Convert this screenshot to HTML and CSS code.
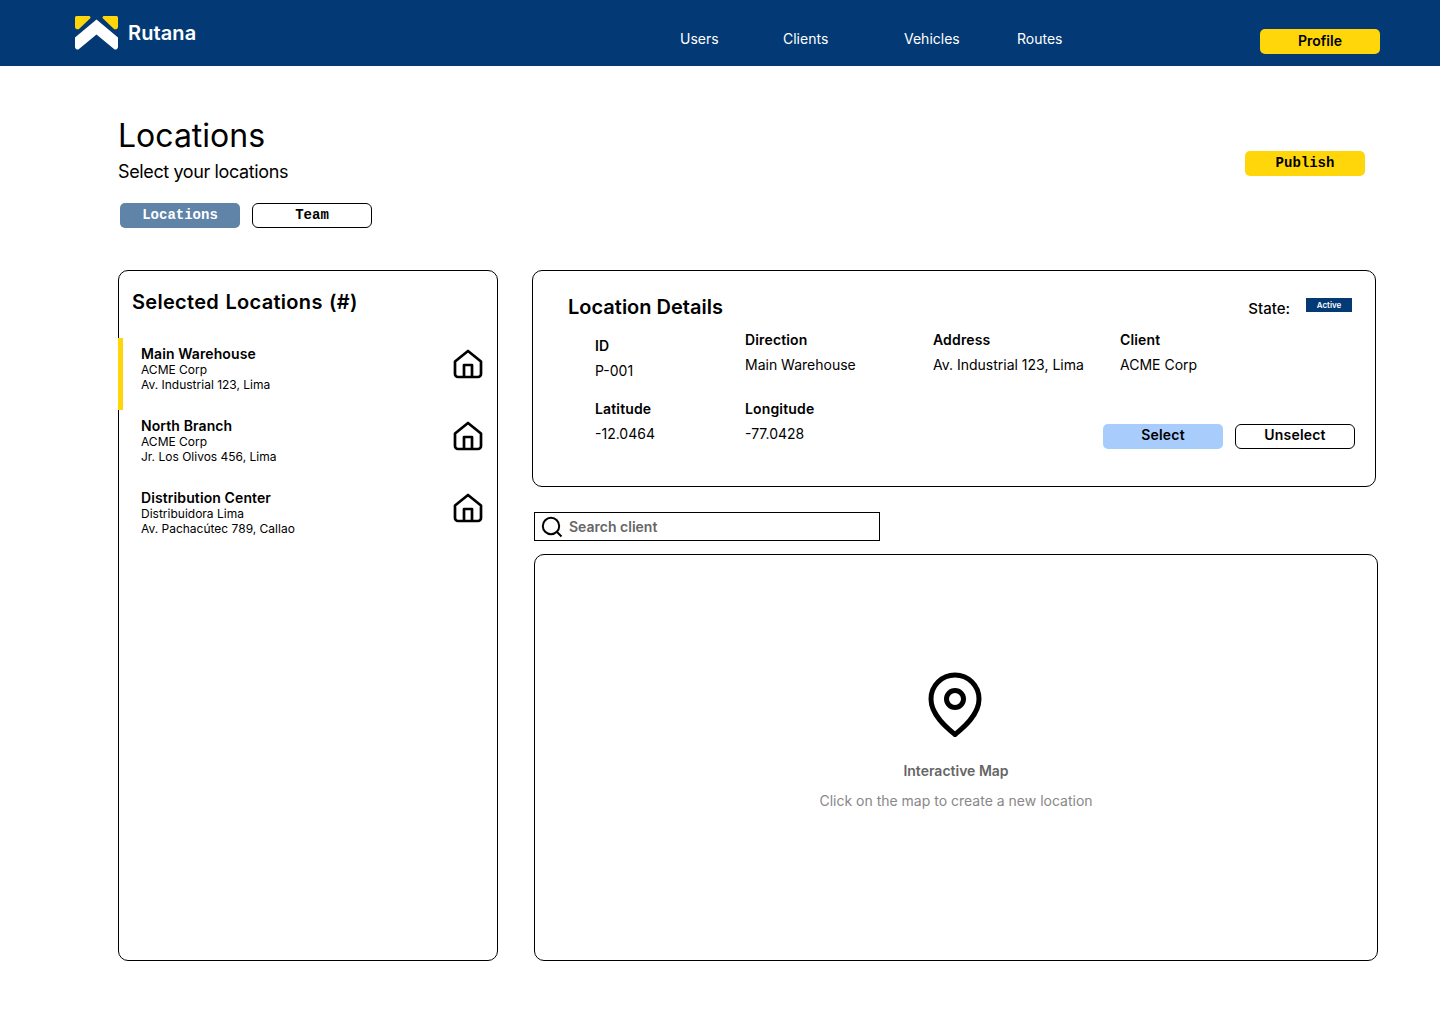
FILE: index.html
```html
<!DOCTYPE html>
<html>
<head>
  <title>Rutana - Locations</title>
  <link rel="stylesheet" href="styles.css">
</head>
<body>
  <header class="topbar">
    <a class="brand" href="#">
      <svg class="brand-mark" width="43" height="34" viewBox="0 0 43 34">
        <path d="M1.500 0H14a1.500 1.500 0 0 1 1 2.600L4.500 12.500A2.600 2.600 0 0 1 0 11V1.500A1.500 1.500 0 0 1 1.500 0Z" fill="#ffd60a"/>
        <path d="M41.500 0H29a1.500 1.500 0 0 0-1 2.600L38.500 12.500A2.600 2.600 0 0 0 43 11V1.500A1.500 1.500 0 0 0 41.500 0Z" fill="#ffd60a"/>
        <path d="M21.500 3.500 43 21.500V31a2.500 2.500 0 0 1-4 2L21.500 18.500 4 33a2.500 2.500 0 0 1-4-2V21.500Z" fill="#fff"/>
      </svg>
      <span>Rutana</span>
    </a>
    <nav class="nav">
      <a class="nav-users" href="#">Users</a>
      <a class="nav-clients" href="#">Clients</a>
      <a class="nav-vehicles" href="#">Vehicles</a>
      <a class="nav-routes" href="#">Routes</a>
    </nav>
    <a class="button yellow profile" href="#">Profile</a>
  </header>

  <main class="page">
    <div class="page-head">
      <div>
        <h1>Locations</h1>
        <p class="subtitle">Select your locations</p>
      </div>
      <a class="button yellow mono publish" href="#">Publish</a>
    </div>

    <div class="tabs">
      <a class="button mono tab-active" href="#">Locations</a>
      <a class="button mono outline" href="#">Team</a>
    </div>

    <div class="columns">
      <section class="panel selected">
        <h2>Selected Locations (#)</h2>
        <ul class="location-list">
          <li class="location current">
            <div>
              <h3>Main Warehouse</h3>
              <p>ACME Corp</p>
              <p>Av. Industrial 123, Lima</p>
            </div>
            <svg class="home" width="32" height="32" viewBox="0 0 32 32"><path d="M3 13.500 16 3l13 10.500V26a3 3 0 0 1-3 3H6a3 3 0 0 1-3-3Z"/><path d="M12 29V17h8v12"/></svg>
          </li>
          <li class="location">
            <div>
              <h3>North Branch</h3>
              <p>ACME Corp</p>
              <p>Jr. Los Olivos 456, Lima</p>
            </div>
            <svg class="home" width="32" height="32" viewBox="0 0 32 32"><path d="M3 13.500 16 3l13 10.500V26a3 3 0 0 1-3 3H6a3 3 0 0 1-3-3Z"/><path d="M12 29V17h8v12"/></svg>
          </li>
          <li class="location">
            <div>
              <h3>Distribution Center</h3>
              <p>Distribuidora Lima</p>
              <p>Av. Pachacútec 789, Callao</p>
            </div>
            <svg class="home" width="32" height="32" viewBox="0 0 32 32"><path d="M3 13.500 16 3l13 10.500V26a3 3 0 0 1-3 3H6a3 3 0 0 1-3-3Z"/><path d="M12 29V17h8v12"/></svg>
          </li>
        </ul>
      </section>

      <div class="right">
        <section class="panel details">
          <div class="details-head">
            <h2>Location Details</h2>
            <div class="state">
              <span>State:</span>
              <span class="badge">Active</span>
            </div>
          </div>
          <div class="fields">
            <div class="field field-id"><strong>ID</strong><span>P-001</span></div>
            <div class="field"><strong>Direction</strong><span>Main Warehouse</span></div>
            <div class="field"><strong>Address</strong><span>Av. Industrial 123, Lima</span></div>
            <div class="field"><strong>Client</strong><span>ACME Corp</span></div>
          </div>
          <div class="fields-bottom">
            <div class="field field-lat"><strong>Latitude</strong><span>-12.0464</span></div>
            <div class="field field-lng"><strong>Longitude</strong><span>-77.0428</span></div>
            <div class="actions">
              <a class="button blue" href="#">Select</a>
              <a class="button outline" href="#">Unselect</a>
            </div>
          </div>
        </section>

        <div class="search">
          <svg width="22" height="22" viewBox="0 0 22 22"><circle cx="10" cy="10" r="8.200"/><path d="m16 16 4.500 4.500"/></svg>
          <span>Search client</span>
        </div>

        <section class="panel map">
          <svg class="pin" width="54" height="66" viewBox="0 0 54 66"><path d="M27 62.500C21 57.500 3 44 3 27a24 24 0 0 1 48 0c0 17-18 30.500-24 35.500Z"/><circle cx="27" cy="27" r="8.500"/></svg>
          <h4>Interactive Map</h4>
          <p>Click on the map to create a new location</p>
        </section>
      </div>
    </div>
  </main>
</body>
</html>
```

FILE: styles.css
```css
* {
  box-sizing: border-box;
}

body {
  margin: 0;
  font-family: Inter, "Noto Sans", sans-serif;
  color: #000;
  background-color: #fff;
}

a {
  text-decoration: none;
  color: inherit;
}

h1, h2, h3, h4, p, ul {
  margin: 0;
  padding: 0;
}

/* Top bar */
.topbar {
  display: flex;
  align-items: flex-start;
  height: 66px;
  padding-left: 75px;
  background-color: #033a75;
  color: #fff;
}

.brand {
  display: flex;
  align-items: center;
  gap: 10px;
  width: 605px;
  height: 34px;
  margin-top: 16px;
  font-size: 20px;
  font-weight: 600;
  letter-spacing: 0.1px;
}

.nav {
  display: flex;
  width: 580px;
  padding-top: 30px;
  font-size: 14px;
  line-height: 17px;
}

.nav-users { width: 103px; }
.nav-clients { width: 121px; }
.nav-vehicles { width: 113px; }

.button {
  display: block;
  flex: none;
  width: 120px;
  height: 25px;
  border-radius: 5px;
  font-size: 14px;
  font-weight: 600;
  line-height: 24px;
  text-align: center;
}

.button.yellow {
  background-color: #ffd60a;
  color: #000;
}

.button.blue {
  background-color: #a8cdfc;
}

.button.outline {
  border: 1px solid #000;
  border-radius: 6px;
  background-color: #fff;
  line-height: 22px;
}

.button.mono {
  font-family: "Liberation Mono", "DejaVu Sans Mono", monospace;
  font-weight: 700;
}

.profile {
  margin-top: 29px;
}

/* Page */
.page {
  padding: 50px 62px 0 118px;
}

.page-head {
  display: flex;
  justify-content: space-between;
  align-items: flex-start;
  padding-right: 13px;
}

h1 {
  font-size: 32px;
  font-weight: 400;
  line-height: 39px;
}

.subtitle {
  margin-top: 6px;
  font-size: 18px;
  line-height: 22px;
  letter-spacing: -0.38px;
}

.publish {
  margin-top: 35px;
}

.tabs {
  display: flex;
  gap: 12px;
  margin-top: 20px;
  margin-left: 2px;
}

.tab-active {
  background-color: #6083a8;
  color: #fff;
}

.columns {
  display: flex;
  gap: 36px;
  margin-top: 42px;
}

.panel {
  border: 1px solid #000;
  border-radius: 10px;
  background-color: #fff;
}

/* Selected list */
.selected {
  width: 380px;
  height: 691px;
}

.selected h2 {
  padding: 18px 0 0 13px;
  font-size: 20px;
  font-weight: 600;
  line-height: 26px;
  word-spacing: 1px;
  letter-spacing: 0.3px;
}

.location-list {
  margin-top: 23px;
  list-style: none;
}

.location {
  display: flex;
  justify-content: space-between;
  align-items: flex-start;
  height: 72px;
  padding: 7px 13px 0 22px;
}

.location.current {
  margin-left: -1px;
  border-left: 5px solid #ffd60a;
  padding-left: 18px;
}

.location h3 {
  font-size: 14px;
  font-weight: 600;
  line-height: 17px;
  letter-spacing: 0.1px;
}

.location p {
  font-size: 12px;
  line-height: 15px;
}

.home {
  margin-top: 3px;
}

.home path {
  fill: none;
  stroke: #000;
  stroke-width: 2.700;
  stroke-linejoin: round;
}

/* Right column */
.right {
  display: flex;
  flex-direction: column;
  width: 844px;
}

.details {
  width: 844px;
  height: 217px;
  margin-left: -2px;
  padding: 23px 23px 0 35px;
}

.details-head {
  display: flex;
  justify-content: space-between;
  align-items: flex-start;
}

.details h2 {
  font-size: 20px;
  font-weight: 600;
  line-height: 26px;
}

.state {
  display: flex;
  gap: 16px;
  font-size: 15px;
  font-weight: 500;
  line-height: 17px;
  padding-top: 4px;
}

.state span:first-child {
  padding-top: 2px;
}

.badge {
  width: 46px;
  height: 14px;
  background-color: #033a75;
  color: #fff;
  font-size: 8px;
  font-weight: 600;
  line-height: 14px;
  text-align: center;
}

.field {
  display: flex;
  flex: none;
  flex-direction: column;
  gap: 8px;
  font-size: 14px;
  line-height: 17px;
}

.field strong {
  font-weight: 600;
  letter-spacing: 0.15px;
}

.fields {
  display: flex;
  margin-top: 11px;
}

.fields .field:nth-child(1) { width: 177px; padding-left: 27px; padding-top: 6px; }
.fields .field:nth-child(2) { width: 188px; }
.fields .field:nth-child(3) { width: 187px; }

.fields-bottom {
  display: flex;
  align-items: flex-start;
  margin-top: 21px;
}

.field-lat {
  width: 177px;
  padding-left: 27px;
}

.field-lng {
  width: 358px;
}

.actions {
  display: flex;
  flex: none;
  gap: 12px;
  margin-top: 24px;
}

.actions .button {
  letter-spacing: 0.2px;
  line-height: 22px;
}

.actions .button.outline {
  line-height: 20px;
}

.search {
  display: flex;
  align-items: center;
  gap: 6px;
  width: 346px;
  height: 29px;
  margin-top: 25px;
  padding-left: 6px;
  border: 1px solid #000;
  color: #666;
  font-size: 14px;
  font-weight: 600;
}

.search svg {
  flex: none;
}

.search circle, .search path {
  fill: none;
  stroke: #000;
  stroke-width: 2;
}

.map {
  display: flex;
  flex-direction: column;
  align-items: center;
  width: 844px;
  height: 407px;
  margin-top: 13px;
  padding-top: 117px;
}

.pin {
  margin-left: -2px;
}

.pin path, .pin circle {
  fill: none;
  stroke: #000;
  stroke-width: 5;
  stroke-linejoin: round;
}

.map h4 {
  margin-top: 24px;
  color: #666;
  font-size: 14px;
  font-weight: 600;
  line-height: 17px;
}

.map p {
  margin-top: 13px;
  color: #888;
  font-size: 14px;
  line-height: 17px;
}
```
